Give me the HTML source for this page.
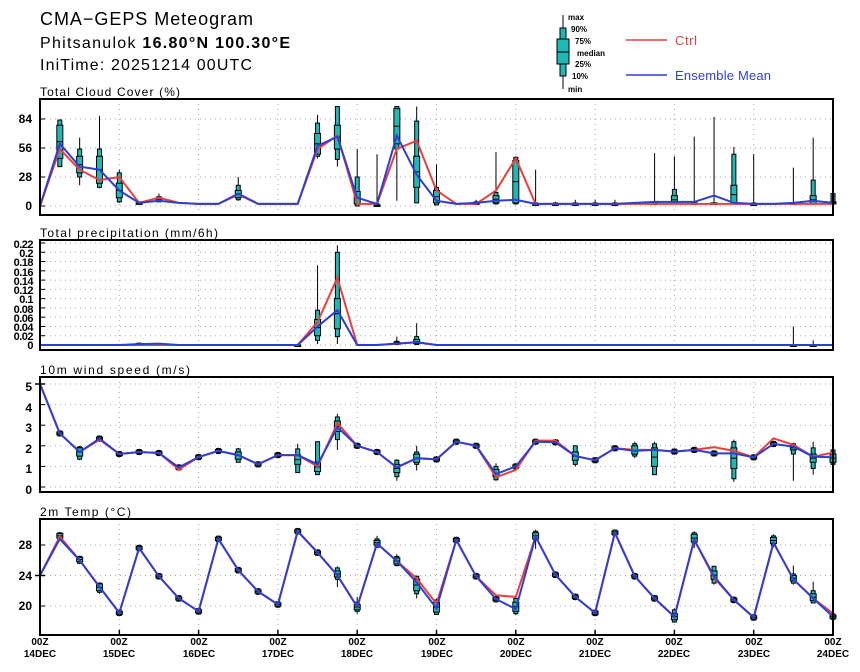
<!DOCTYPE html>
<html><head><meta charset="utf-8"><style>
html,body{margin:0;padding:0;background:#fff;}
svg{display:block;font-family:"Liberation Sans","DejaVu Sans",sans-serif;}
.yl{font-weight:bold;font-size:12px;text-anchor:end;}
.pl{font-weight:bold;font-size:11px;text-anchor:end;letter-spacing:-0.5px}
.xl{font-weight:bold;font-size:10px;text-anchor:middle;}
.pt{font-size:12px;}
</style></head><body>
<svg id="s" width="860" height="672" viewBox="0 0 860 672" xmlns="http://www.w3.org/2000/svg">
<rect width="860" height="672" fill="#fff"/>
<text x="40" y="25" font-size="18" textLength="213" lengthAdjust="spacing">CMA−GEPS Meteogram</text>
<text x="40" y="48" font-size="16" textLength="250" lengthAdjust="spacing">Phitsanulok <tspan font-weight="bold">16.80°N 100.30°E</tspan></text>
<text x="40" y="70" font-size="16" textLength="212" lengthAdjust="spacing">IniTime: 20251214 00UTC</text>
<!-- legend -->
<line x1="563" y1="15" x2="563" y2="89" stroke="#000" stroke-width="1"/>
<rect x="560" y="28" width="6" height="48" fill="#20b8b4" stroke="#000"/>
<rect x="557" y="39" width="12" height="25" fill="#20b8b4" stroke="#000"/>
<line x1="557" y1="52" x2="569" y2="52" stroke="#000"/>
<g font-size="8" font-weight="bold">
<text x="568" y="20">max</text><text x="571" y="32">90%</text><text x="575" y="44">75%</text>
<text x="577" y="56">median</text><text x="575" y="67">25%</text><text x="572" y="79">10%</text><text x="568" y="92">min</text>
</g>
<line x1="626" y1="40" x2="667" y2="40" stroke="#e8403f" stroke-width="1.5"/>
<text x="675" y="45" font-size="13" fill="#e8403f" textLength="22" lengthAdjust="spacing">Ctrl</text>
<line x1="626" y1="75" x2="667" y2="75" stroke="#2f3fd0" stroke-width="1.5"/>
<text x="675" y="80" font-size="13" fill="#2f3fd0" textLength="96" lengthAdjust="spacing">Ensemble Mean</text>

<text class="pt" x="40" y="96" textLength="140" lengthAdjust="spacing">Total Cloud Cover (%)</text>
<text class="pt" x="40" y="237" textLength="178" lengthAdjust="spacing">Total precipitation (mm/6h)</text>
<text class="pt" x="40" y="374" textLength="150" lengthAdjust="spacing">10m wind speed (m/s)</text>
<text class="pt" x="40" y="516" textLength="91" lengthAdjust="spacing">2m Temp (°C)</text>

<g class="yl">
<text x="32" y="123">84</text><text x="32" y="152">56</text><text x="32" y="181">28</text><text x="32" y="210">0</text>
<text x="32" y="391">5</text><text x="32" y="412">4</text><text x="32" y="432">3</text><text x="32" y="453">2</text><text x="32" y="473">1</text><text x="32" y="494">0</text>
<text x="32" y="549">28</text><text x="32" y="580">24</text><text x="32" y="610">20</text>
</g>
<g class="pl">
<text x="33" y="248">0.22</text><text x="33" y="257">0.2</text><text x="33" y="266">0.18</text><text x="33" y="276">0.16</text><text x="33" y="285">0.14</text><text x="33" y="294">0.12</text><text x="33" y="303">0.1</text><text x="33" y="313">0.08</text><text x="33" y="322">0.06</text><text x="33" y="331">0.04</text><text x="33" y="340">0.02</text><text x="33" y="349">0</text>
</g>
<g class="xl">
<text x="40" y="645">00Z</text><text x="40" y="657">14DEC</text>
<text x="119" y="645">00Z</text><text x="119" y="657">15DEC</text>
<text x="199" y="645">00Z</text><text x="199" y="657">16DEC</text>
<text x="278" y="645">00Z</text><text x="278" y="657">17DEC</text>
<text x="357" y="645">00Z</text><text x="357" y="657">18DEC</text>
<text x="437" y="645">00Z</text><text x="437" y="657">19DEC</text>
<text x="516" y="645">00Z</text><text x="516" y="657">20DEC</text>
<text x="595" y="645">00Z</text><text x="595" y="657">21DEC</text>
<text x="674" y="645">00Z</text><text x="674" y="657">22DEC</text>
<text x="754" y="645">00Z</text><text x="754" y="657">23DEC</text>
<text x="833" y="645">00Z</text><text x="833" y="657">24DEC</text>
</g>
<g id="g"></g>
</svg>
<script>
var NS="http://www.w3.org/2000/svg",G=document.getElementById("g");
function el(t,a){var e=document.createElementNS(NS,t);for(var k in a)e.setAttribute(k,a[k]);G.appendChild(e);return e;}
function X(i){return 40+i*19.825;}
var L=40,R=833;
var P=[
 {top:99,bot:215,y:function(v){return 206-v*1.036},ticks:[0,28,56,84]},
 {top:240,bot:350,y:function(v){return 345-v*463.6},ticks:[0,.02,.04,.06,.08,.1,.12,.14,.16,.18,.2,.22]},
 {top:377,bot:492,y:function(v){return 487-v*20.6},ticks:[0,1,2,3,4,5]},
 {top:519,bot:635,y:function(v){return 545-(v-28)*7.625},ticks:[20,24,28]}
];
var cM=[0,60,38,35,15,3,5,3,2,2,12,2,2,2,58,67,8,2,68,30,5,2,3,5,6,2,2,2,2,2,3,4,4,4,10,3,2,2,3,5,3];
var cR=[0,55,35,25,28,3,8,3,2,2,11,2,2,2,55,68,2,2,55,63,15,2,2,15,46,2,2,2,2,2,2,2,2,2,2,2,2,2,2,2,2];
var cB={1:[38,38,46,78,83,83],2:[20,28,32,48,55,66],3:[17,18,22,48,55,87],4:[3,4,8,22,32,35],5:[2,2,2,3,4,4],6:[4,4,5,8,9,12],10:[5,6,8,15,20,28],14:[46,48,50,70,80,88],15:[38,45,55,78,96,96],16:[0,0,2,14,28,55],17:[0,0,0,1,2,50],18:[5,55,60,94,96,96],19:[3,3,18,48,82,96],20:[1,1,3,15,18,40],22:[2,2,2,3,4,6],23:[2,2,3,10,13,52],24:[2,2,3,44,47,48],25:[2,2,2,2,3,35],26:[2,2,2,2,3,4],27:[2,2,2,2,3,6],28:[2,2,2,2,3,6],29:[2,2,2,2,3,6],31:[2,2,2,3,3,51],32:[2,2,2,10,16,48],33:[2,2,2,3,3,67],34:[2,2,2,3,3,86],35:[2,2,2,20,50,57],36:[2,2,2,2,3,50],38:[2,2,2,3,3,37],39:[2,2,2,10,25,66],40:[2,2,2,4,12,12]};
var pM=[],pR=[];for(var i=0;i<=40;i++){pM.push(0);pR.push(0);}
pM[5]=0.002;pM[6]=0.003;pM[14]=0.04;pM[15]=0.075;pM[18]=0.003;pM[19]=0.006;pR[14]=0.05;pR[15]=0.145;pR[18]=0.003;pR[19]=0.006;
var pB={13:[0,0,0,0,0.001,0.001],14:[0.002,0.01,0.02,0.055,0.075,0.172],15:[0.002,0.018,0.035,0.1,0.2,0.215],18:[0,0.001,0.002,0.006,0.008,0.018],19:[0,0.001,0.003,0.012,0.018,0.047],5:[0,0.001,0.002,0.003,0.004,0.004],38:[0,0,0,0,0,0.04],39:[0,0,0,0,0,0.01]};
var wM=[5.0,2.6,1.7,2.35,1.6,1.7,1.65,0.95,1.45,1.75,1.55,1.1,1.55,1.55,1.1,2.9,2.0,1.7,0.95,1.4,1.34,2.2,2.0,0.63,1.0,2.2,2.17,1.5,1.3,1.88,1.75,1.8,1.72,1.8,1.63,1.63,1.44,2.09,1.96,1.47,1.44];
var wR=wM.slice();wR[3]=2.3;wR[7]=0.85;wR[14]=1.0;wR[15]=3.1;wR[23]=0.47;wR[24]=0.83;wR[25]=2.25;wR[26]=2.25;wR[30]=1.8;wR[34]=1.93;wR[35]=1.75;wR[37]=2.36;wR[38]=2.05;wR[40]=1.67;
var wB={0:[5,5,5,5,5,5],13:[0.7,1.1,1.55,1.85,0.7,2.1],14:[0.6,0.75,1.2,2.2,0.6,2.2],15:[2.3,2.7,3.2,3.4,1.8,3.55],18:[0.5,0.7,1.1,1.3,0.3,1.35],19:[1.1,1.2,1.6,1.7,0.8,2.0],10:[1.2,1.35,1.7,1.85,1.2,1.9],27:[1.1,1.3,1.7,2.0,1.0,2.0],31:[0.6,1.0,1.9,2.1,0.6,2.2],35:[0.4,0.9,1.9,2.2,0.25,2.3],38:[1.6,1.8,2.0,2.1,0.3,2.15],39:[0.9,1.2,1.6,1.9,0.6,2.2],40:[1.1,1.2,1.6,1.8,1.1,1.8],23:[0.35,0.5,0.85,1.0,0.3,1.15],2:[1.35,1.5,1.9,1.95,1.3,2.0],30:[1.5,1.6,2.0,2.1,1.4,2.2]};
var tM=[24,28.8,26,22.5,19.1,27.6,23.9,21,19.3,28.8,24.7,21.9,20.2,29.8,27,24,19.9,28.2,25.9,23.1,19.7,28.65,23.9,20.9,19.6,29.1,24.1,21.2,19.1,29.6,23.9,21.0,18.6,28.7,23.9,20.8,18.5,28.3,23.5,21.0,18.6];
var tR=tM.slice();tR[1]=29.1;tR[19]=23.6;tR[20]=20.3;tR[23]=21.4;tR[24]=21.2;tR[34]=23.7;tR[40]=19.0;
var tB={0:[24,24,24,24,24,24],15:[23.5,23.8,24.6,25,22.5,25.2],16:[19.3,19.5,20.2,20.5,19,21.2],19:[21.6,22,23.5,23.9,21,24],20:[18.9,19.2,20.5,20.8,18.8,21],24:[19,19.3,20.5,21,18.8,21.2],25:[28.6,28.8,29.6,29.8,27.5,30],32:[17.9,18.2,19,19.5,17.8,19.7],33:[28.2,28.4,29.4,29.6,27.6,29.8],34:[23,23.5,24.6,25.2,22.8,25.3],37:[27.9,28.2,29,29.2,27.7,29.4],38:[23,23.3,24,24.2,22.8,25.3],39:[20.4,20.7,21.6,22,20.4,23.2],1:[28.7,28.9,29.5,29.6,28.6,29.7],2:[25.6,25.8,26.4,26.5,25.5,26.6],3:[21.8,22,22.9,23,21.6,23.1],17:[27.7,28,28.6,28.8,27.6,29.2],18:[25.3,25.5,26.3,26.5,25.2,26.8]};
function dflt(v,s){return [v-s,v-s*0.6,v+s*0.6,v+s,v-s*1.3,v+s*1.3];}
function drawPanel(p,M,Rr,B,ds,opt){
 for(var d=1;d<10;d++){var x=X(d*4);el("line",{x1:x,y1:p.top,x2:x,y2:p.bot,stroke:"#aaa","stroke-width":1,"stroke-dasharray":"1,4"});}
 p.ticks.forEach(function(t){var y=p.y(t);el("line",{x1:L,y1:y,x2:R,y2:y,stroke:"#aaa","stroke-width":1,"stroke-dasharray":"1,4"});el("line",{x1:L,y1:y,x2:L+5,y2:y,stroke:"#000"});});
 for(var i=0;i<=40;i++){
  var b=B[i];
  if(!b){ if(ds===null) continue; b=dflt(M[i],ds);}
  var mn,p10,p25,p75,p90,mx;
  if(opt==="c"){mn=b[0];p10=b[1];p25=b[2];p75=b[3];p90=b[4];mx=b[5];}
  else {p10=b[0];p25=b[1];p75=b[2];p90=b[3];mn=b[4];mx=b[5];}
  var x=X(i);
  if(mx===mn&&p10===p90){el("line",{x1:x-5,y1:p.y(mn),x2:x+5,y2:p.y(mn),stroke:"#000","stroke-width":1.5});continue;}
  el("line",{x1:x,y1:p.y(mn),x2:x,y2:p.y(mx),stroke:"#000","stroke-width":1});
  var y90=p.y(p90),y10=p.y(p10);
  el("rect",{x:x-2,y:y90,width:4,height:Math.max(1.5,y10-y90),fill:"#20b8b4",stroke:"#000","stroke-width":1});
  var y75=p.y(p75),y25=p.y(p25);
  el("rect",{x:x-3,y:y75,width:6,height:Math.max(1.5,y25-y75),fill:"#20b8b4",stroke:"#000","stroke-width":1});
  var md=p.y((p25+p75)/2);
  el("line",{x1:x-3,y1:md,x2:x+3,y2:md,stroke:"#000","stroke-width":1});
 }
 function line(arr,c){var s="";for(var i=0;i<=40;i++)s+=(i?"L":"M")+X(i).toFixed(1)+","+p.y(arr[i]).toFixed(1);el("path",{d:s,fill:"none",stroke:c,"stroke-width":2});}
 line(Rr,"#e8403f");line(M,"#2f3fd0");
 el("rect",{x:L,y:p.top,width:R-L,height:p.bot-p.top,fill:"none",stroke:"#000","stroke-width":2});
}
drawPanel(P[0],cM,cR,cB,null,"c");
drawPanel(P[1],pM,pR,pB,null,"c");
drawPanel(P[2],wM,wR,wB,0.12,"w");
drawPanel(P[3],tM,tR,tB,0.35,"w");
for(var d=0;d<=10;d++){var x=X(d*4);el("line",{x1:x,y1:635,x2:x,y2:630,stroke:"#000","stroke-width":1.5});}
</script>
</body></html>
